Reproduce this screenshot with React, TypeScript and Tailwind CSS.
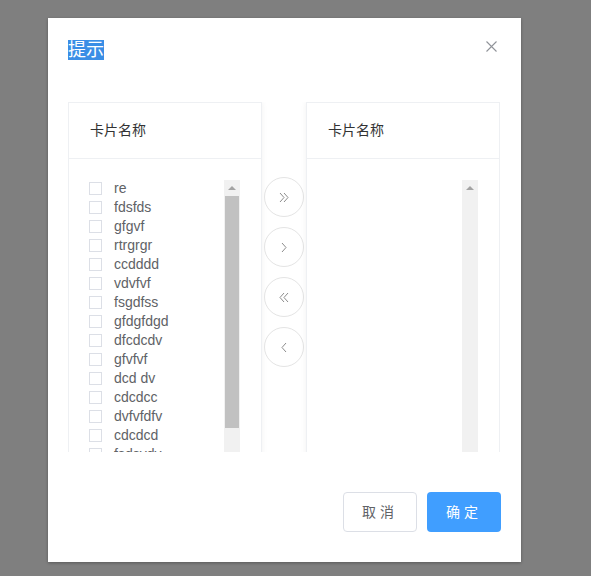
import React from "react";

const leftItems = [
  "re",
  "fdsfds",
  "gfgvf",
  "rtrgrgr",
  "ccdddd",
  "vdvfvf",
  "fsgdfss",
  "gfdgfdgd",
  "dfcdcdv",
  "gfvfvf",
  "dcd dv",
  "cdcdcc",
  "dvfvfdfv",
  "cdcdcd",
  "fsdsvdv",
];

function Arrow({ dir, double }: { dir: "left" | "right"; double?: boolean }) {
  const one = dir === "right" ? "M1 1l4 4.5L1 10" : "M5 1L1 5.5 5 10";
  const two = dir === "right" ? "M5 1l4 4.5L5 10" : "M9 1L5 5.5 9 10";
  return (
    <svg width={double ? 10 : 6} height="11" viewBox={double ? "0 0 10 11" : "0 0 6 11"} fill="none" stroke="#8c8c8c" strokeWidth="1">
      {double ? (
        <>
          <path d={one} />
          <path d={two} />
        </>
      ) : (
        <path d={one} />
      )}
    </svg>
  );
}

function ScrollBar({ thumb }: { thumb: boolean }) {
  return (
    <div className="mt-[21px] flex h-[282px] w-[16px] shrink-0 flex-col bg-[#f1f1f1]">
      <div className="flex h-[16px] items-center justify-center">
        <div className="h-0 w-0 border-x-[4px] border-b-[4px] border-x-transparent border-b-[#a3a3a3]" />
      </div>
      {thumb ? <div className="mx-[1px] h-[232px] bg-[#c1c1c1]" /> : <div className="h-[232px]" />}
      <div className="flex-1" />
      <div className="flex h-[16px] items-center justify-center">
        <div className="h-0 w-0 border-x-[4px] border-t-[4px] border-x-transparent border-t-[#505050]" />
      </div>
    </div>
  );
}

function Panel({ items }: { items: string[] }) {
  return (
    <div className="flex h-[420px] w-[194px] shrink-0 flex-col border border-[#eef0f3] bg-white shadow-[0_0_6px_rgba(0,0,0,0.06)]">
      <div className="flex h-[56px] shrink-0 items-center border-b border-[#eef0f3] pl-[21px] text-[14px] text-[#333]">
        卡片名称
      </div>
      <div className="flex flex-1 pl-[20px] pr-[21px]">
        <div className="flex flex-1 flex-col pt-[20px]">
          {items.map((t) => (
            <div key={t} className="flex h-[19px] items-center gap-[12px]">
              <span className="h-[13px] w-[13px] shrink-0 border border-[#dcdfe6] bg-white" />
              <span className="text-[14px] leading-[19px] text-[#606266]">{t}</span>
            </div>
          ))}
        </div>
        <ScrollBar thumb={items.length > 0} />
      </div>
    </div>
  );
}

function CircleButton({ children }: { children: React.ReactNode }) {
  return (
    <div className="flex h-[40px] w-[40px] items-center justify-center rounded-full border border-[#e4e4e4] bg-white">
      {children}
    </div>
  );
}

export default function App() {
  return (
    <div
      className="h-[576px] w-[591px] overflow-hidden bg-[#7f7f7f] pl-[48px] pt-[18px]"
      style={{ fontFamily: '"Liberation Sans", "Noto Sans CJK SC", sans-serif' }}
    >
      <div className="flex h-[544px] w-[473px] flex-col bg-white pl-[20px] pr-[21px] shadow-[0_1px_3px_rgba(0,0,0,0.3)]">
        <div className="flex h-[84px] shrink-0 items-start justify-between pt-[22px]">
          <span className="bg-[#3a8ee6] text-[18px] leading-[20px] text-white">提示</span>
          <svg width="11" height="11" viewBox="0 0 11 11" className="mr-[3px] mt-[1px]" stroke="#909399" strokeWidth="1.1">
            <path d="M0.5 0.5l10 10M10.5 0.5l-10 10" />
          </svg>
        </div>
        <div className="flex h-[350px] shrink-0 overflow-hidden">
          <Panel items={leftItems} />
          <div className="flex w-[44px] shrink-0 flex-col items-center gap-[10px] pt-[75px]">
            <CircleButton>
              <Arrow dir="right" double />
            </CircleButton>
            <CircleButton>
              <Arrow dir="right" />
            </CircleButton>
            <CircleButton>
              <Arrow dir="left" double />
            </CircleButton>
            <CircleButton>
              <Arrow dir="left" />
            </CircleButton>
          </div>
          <Panel items={[]} />
        </div>
        <div className="flex flex-1 items-start justify-end gap-[10px] pt-[40px]">
          <button className="h-[40px] w-[74px] rounded-[4px] border border-[#dcdfe6] bg-white text-[14px] tracking-[4px] text-[#606266]">
            取消
          </button>
          <button className="-mr-[1px] h-[40px] w-[74px] rounded-[4px] bg-[#409eff] text-[14px] tracking-[4px] text-white">
            确定
          </button>
        </div>
      </div>
    </div>
  );
}
